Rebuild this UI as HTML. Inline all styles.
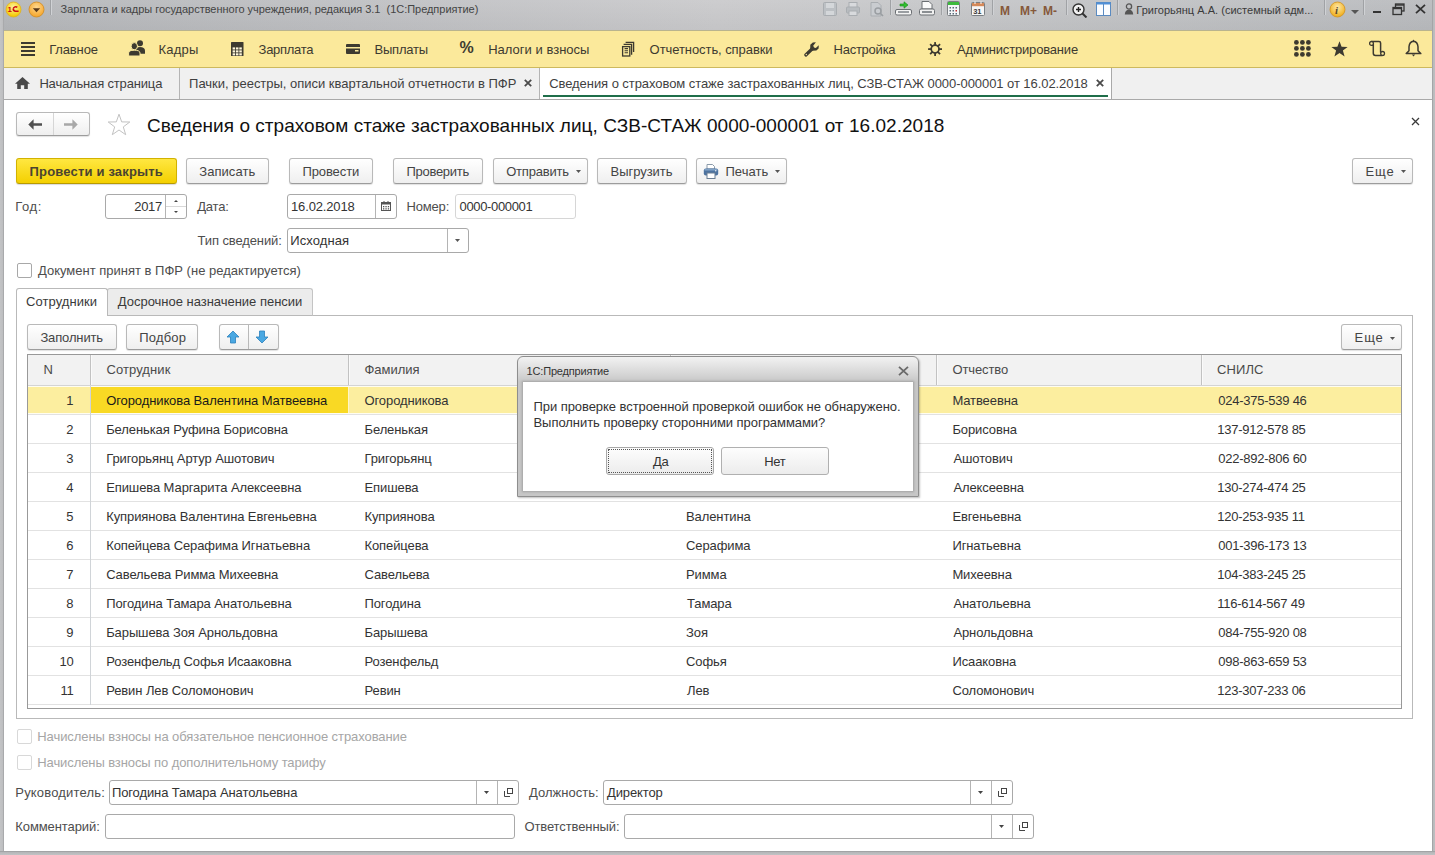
<!DOCTYPE html><html><head><meta charset="utf-8"><style>
html,body{margin:0;padding:0}
body{width:1435px;height:855px;overflow:hidden;position:relative;background:#abadb0;font-family:"Liberation Sans",sans-serif}
.a{position:absolute;display:block}
.t{position:absolute;white-space:pre;line-height:1}
</style></head><body>
<div class="a" style="left:0px;top:0px;width:1435px;height:855px;background:#aeb0b3"></div>
<div class="a" style="left:0px;top:0px;width:1435px;height:31px;background:linear-gradient(90deg,#b5b7ba 0%,#bfc0c3 25%,#cacacc 50%,#c6c7c9 65%,#b9bbbe 100%)"></div>
<div class="a" style="left:0px;top:0px;width:1435px;height:31px;background:linear-gradient(rgba(255,255,255,0.06),rgba(0,0,0,0.03))"></div>
<div class="a" style="left:0px;top:0px;width:4px;height:855px;background:linear-gradient(90deg,#c3c4c6,#bdbec0 70%,#a9aaac 75%,#a9aaac)"></div>
<div class="a" style="left:1432px;top:0px;width:3px;height:855px;background:linear-gradient(90deg,#a4a5a7 33%,#b9babc 34%,#bdbec0)"></div>
<svg class="a" style="left:5px;top:1px;" width="17" height="17" viewBox="0 0 17 17"><defs><radialGradient id="lg" cx="50%" cy="35%" r="60%"><stop offset="0" stop-color="#fff7a0"/><stop offset="1" stop-color="#f5c800"/></radialGradient></defs><circle cx="8.5" cy="8.5" r="7.5" fill="url(#lg)" stroke="#e0b020" stroke-width="0.8"/><text x="2.6" y="11.4" font-family="Liberation Sans" font-weight="bold" font-size="8" fill="#cc1010">1</text><path d="M8.3 7.2 Q10 5 12.3 6.2 M8.2 7.6 Q8.2 10.2 10.5 10.2 L13.6 10.2" stroke="#cc1010" stroke-width="1.6" fill="none"/></svg>
<svg class="a" style="left:28px;top:1px;" width="17" height="17" viewBox="0 0 17 17"><defs><radialGradient id="og" cx="50%" cy="35%" r="60%"><stop offset="0" stop-color="#ffd890"/><stop offset="1" stop-color="#f5a830"/></radialGradient></defs><circle cx="8.5" cy="8.5" r="7.5" fill="url(#og)" stroke="#d08a20" stroke-width="0.8"/><path d="M4.8 7.2 L12.2 7.2 L8.5 11.2 Z" fill="#5a3a1a"/></svg>
<div class="a" style="left:50px;top:0px;width:1px;height:15px;background:#a0a2a5;box-shadow:1px 0 0 #d0d2d5"></div>
<div class="t" style="left:60.60px;top:4px;font-size:11px;color:#444;letter-spacing:-0.028px;">Зарплата и кадры государственного учреждения, редакция 3.1  (1С:Предприятие)</div>
<svg class="a" style="left:823px;top:2px;" width="14" height="14" viewBox="0 0 14 14"><rect x="0.5" y="0.5" width="13" height="13" rx="1" fill="#bcc0c4" stroke="#a9adb1"/><rect x="3" y="1" width="8" height="5" fill="#d4d7da"/><rect x="3" y="9" width="8" height="4" fill="#d4d7da"/></svg>
<svg class="a" style="left:846px;top:2px;" width="14" height="14" viewBox="0 0 14 14"><rect x="3" y="0.5" width="8" height="5" fill="#d8dadd" stroke="#a9adb1"/><rect x="0.5" y="5" width="13" height="6" rx="1" fill="#b8bcc0" stroke="#a9adb1"/><rect x="3" y="9" width="8" height="4.5" fill="#d8dadd" stroke="#a9adb1"/></svg>
<svg class="a" style="left:870px;top:2px;" width="14" height="15" viewBox="0 0 14 15"><path d="M1 0.5 H8 L11 3.5 V14 H1 Z" fill="#c9ccd0" stroke="#a9adb1"/><circle cx="8" cy="9" r="3" fill="none" stroke="#9a9ea2" stroke-width="1.5"/><path d="M10 11 L13 14" stroke="#9a9ea2" stroke-width="1.6"/></svg>
<div class="a" style="left:890px;top:0px;width:1px;height:15px;background:#a0a2a5;box-shadow:1px 0 0 #d0d2d5"></div>
<svg class="a" style="left:895px;top:1px;" width="17" height="15" viewBox="0 0 17 15"><path d="M5 3 H9 V0.8 L13 4 L9 7.2 V5 H5 Z" fill="#2fbf2f" stroke="#1a8a1a" stroke-width="0.6"/><rect x="0.5" y="8.5" width="16" height="5.5" rx="1.5" fill="#f4f4f4" stroke="#6a6e72"/><rect x="3" y="10" width="11" height="2" fill="#9a9ea2"/></svg>
<svg class="a" style="left:919px;top:1px;" width="16" height="15" viewBox="0 0 16 15"><path d="M3 0.5 H10 L13 3.5 V8 H3 Z" fill="#fafafa" stroke="#6a6e72"/><rect x="0.5" y="8" width="15" height="6" rx="1.5" fill="#f0f0f0" stroke="#6a6e72"/><rect x="3" y="10" width="10" height="2" fill="#8a8e92"/></svg>
<div class="a" style="left:941px;top:0px;width:1px;height:15px;background:#a0a2a5;box-shadow:1px 0 0 #d0d2d5"></div>
<svg class="a" style="left:947px;top:1px;" width="13" height="15" viewBox="0 0 13 15"><rect x="0.5" y="0.5" width="12" height="14" rx="1" fill="#f4f6f8" stroke="#7a7e82"/><rect x="1" y="1" width="11" height="3" fill="#3cba3c"/><g fill="#5a6a7a"><rect x="2.5" y="6" width="1.5" height="1.5"/><rect x="5.5" y="6" width="1.5" height="1.5"/><rect x="8.5" y="6" width="1.5" height="1.5"/><rect x="2.5" y="9" width="1.5" height="1.5"/><rect x="5.5" y="9" width="1.5" height="1.5"/><rect x="8.5" y="9" width="1.5" height="1.5" fill="#c03030"/><rect x="2.5" y="12" width="1.5" height="1.5"/><rect x="5.5" y="12" width="1.5" height="1.5"/><rect x="8.5" y="12" width="1.5" height="1.5"/></g></svg>
<svg class="a" style="left:971px;top:1px;" width="14" height="15" viewBox="0 0 14 15"><rect x="0.5" y="1.5" width="13" height="13" rx="1" fill="#f6f6f6" stroke="#7a7e82"/><rect x="1" y="2" width="12" height="3.2" fill="#d4895a"/><path d="M4 0.5 V3 M10 0.5 V3" stroke="#fff" stroke-width="1"/><text x="2.2" y="12.8" font-family="Liberation Sans" font-weight="bold" font-size="7.5" fill="#3a3a3a">31</text></svg>
<div class="a" style="left:992px;top:0px;width:1px;height:15px;background:#a0a2a5;box-shadow:1px 0 0 #d0d2d5"></div>
<div class="t" style="left:1000.00px;top:5px;font-size:12px;color:#85583a;letter-spacing:0.000px;font-weight:bold;">M</div>
<div class="t" style="left:1020.00px;top:5px;font-size:12px;color:#85583a;letter-spacing:0.000px;font-weight:bold;">M+</div>
<div class="t" style="left:1043.00px;top:5px;font-size:12px;color:#85583a;letter-spacing:0.000px;font-weight:bold;">M-</div>
<div class="a" style="left:1066px;top:0px;width:1px;height:15px;background:#a0a2a5;box-shadow:1px 0 0 #d0d2d5"></div>
<svg class="a" style="left:1072px;top:3px;" width="16" height="15" viewBox="0 0 16 15"><circle cx="6.5" cy="6.5" r="5.5" fill="#f2f2f2" stroke="#333" stroke-width="1.4"/><path d="M4 6.5 H9 M6.5 4 V9" stroke="#222" stroke-width="1.4"/><path d="M10.5 10.5 L14.5 14.5" stroke="#333" stroke-width="2"/></svg>
<svg class="a" style="left:1096px;top:2px;" width="15" height="14" viewBox="0 0 15 14"><rect x="0.5" y="0.5" width="14" height="13" fill="#fafcff" stroke="#5a8ac0"/><rect x="0.5" y="0.5" width="14" height="2" fill="#4f8fd8"/><path d="M7.5 2 V13.5" stroke="#5a8ac0"/></svg>
<div class="a" style="left:1117px;top:0px;width:1px;height:15px;background:#a0a2a5;box-shadow:1px 0 0 #d0d2d5"></div>
<svg class="a" style="left:1124px;top:3px;" width="10" height="12" viewBox="0 0 10 12"><circle cx="5" cy="3.5" r="2.6" fill="none" stroke="#555" stroke-width="1.3"/><path d="M0.8 11.5 Q1 6.8 5 6.8 Q9 6.8 9.2 11.5 Z" fill="#555"/></svg>
<div class="t" style="left:1136.30px;top:5px;font-size:11px;color:#3a3a3a;letter-spacing:0.022px;">Григорьянц А.А. (системный адм...</div>
<div class="a" style="left:1324px;top:0px;width:1px;height:15px;background:#a0a2a5;box-shadow:1px 0 0 #d0d2d5"></div>
<svg class="a" style="left:1329px;top:1px;" width="17" height="17" viewBox="0 0 17 17"><defs><radialGradient id="ig" cx="50%" cy="35%" r="60%"><stop offset="0" stop-color="#ffe9a8"/><stop offset="1" stop-color="#f0b020"/></radialGradient></defs><circle cx="8.5" cy="8.5" r="7.5" fill="url(#ig)" stroke="#d09020" stroke-width="0.8"/><text x="6" y="13" font-family="Liberation Serif" font-style="italic" font-weight="bold" font-size="11" fill="#5a4a2a">i</text></svg>
<svg class="a" style="left:1351px;top:10px;" width="8" height="4" viewBox="0 0 8 4"><path d="M0 0 H8 L4 4 Z" fill="#555"/></svg>
<div class="a" style="left:1363px;top:0px;width:1px;height:15px;background:#a0a2a5;box-shadow:1px 0 0 #d0d2d5"></div>
<div class="a" style="left:1373px;top:11px;width:8px;height:2px;background:#333"></div>
<svg class="a" style="left:1392px;top:3px;" width="13" height="13" viewBox="0 0 13 13"><rect x="3.5" y="1" width="8.5" height="7" fill="none" stroke="#333" stroke-width="1.3"/><rect x="1" y="4.5" width="8.5" height="7" fill="#b8babd" stroke="#333" stroke-width="1.3"/><path d="M1 5.5 H9.5" stroke="#333" stroke-width="1.4"/><path d="M3.5 2 H12" stroke="#333" stroke-width="1.4"/></svg>
<svg class="a" style="left:1415px;top:4px;" width="11" height="10" viewBox="0 0 11 10"><path d="M1 0.8 L10 9.2 M10 0.8 L1 9.2" stroke="#333" stroke-width="1.8"/></svg>
<div class="a" style="left:4px;top:31px;width:1428px;height:37px;background:#fbe99b"></div>
<div class="a" style="left:4px;top:67px;width:1428px;height:1px;background:#cdb95e"></div>
<div class="a" style="left:4px;top:30px;width:1428px;height:1px;background:#b9b48e"></div>
<div class="a" style="left:21px;top:42px;width:14px;height:2px;background:#3d3a30"></div>
<div class="a" style="left:21px;top:46px;width:14px;height:2px;background:#3d3a30"></div>
<div class="a" style="left:21px;top:50px;width:14px;height:2px;background:#3d3a30"></div>
<div class="a" style="left:21px;top:54px;width:14px;height:2px;background:#3d3a30"></div>
<div class="t" style="left:49.20px;top:43px;font-size:13px;color:#3d3a30;letter-spacing:-0.150px;">Главное</div>
<svg class="a" style="left:128px;top:40px;" width="18" height="17" viewBox="0 0 18 17"><circle cx="12" cy="3.3" r="3" fill="#3d3a30"/><path d="M7.5 13.8 V10.5 Q7.5 7 12 7 Q16.8 7 17 10.5 V13.8 Z" fill="#3d3a30"/><ellipse cx="6.3" cy="6.2" rx="3.2" ry="3.6" fill="#3d3a30" stroke="#fae99c" stroke-width="1"/><path d="M0.6 16 V13 Q0.6 10.2 6.3 10.2 Q12 10.2 12 13 V16 Z" fill="#3d3a30" stroke="#fae99c" stroke-width="1"/></svg>
<div class="t" style="left:158.40px;top:43px;font-size:13px;color:#3d3a30;letter-spacing:0.225px;">Кадры</div>
<svg class="a" style="left:231px;top:42px;" width="13" height="14" viewBox="0 0 13 14"><rect x="0" y="0" width="12.5" height="14" rx="0.6" fill="#3d3a30"/><rect x="1.60" y="5.40" width="2.5" height="2.1" fill="#fff8dc"/><rect x="1.60" y="8.35" width="2.5" height="2.1" fill="#fff8dc"/><rect x="1.60" y="11.30" width="2.5" height="2.1" fill="#fff8dc"/><rect x="4.95" y="5.40" width="2.5" height="2.1" fill="#fff8dc"/><rect x="4.95" y="8.35" width="2.5" height="2.1" fill="#fff8dc"/><rect x="4.95" y="11.30" width="2.5" height="2.1" fill="#fff8dc"/><rect x="8.30" y="5.40" width="2.5" height="2.1" fill="#fff8dc"/><rect x="8.30" y="8.35" width="2.5" height="2.1" fill="#fff8dc"/><rect x="8.30" y="11.30" width="2.5" height="2.1" fill="#fff8dc"/></svg>
<div class="t" style="left:258.60px;top:43px;font-size:13px;color:#3d3a30;letter-spacing:-0.286px;">Зарплата</div>
<svg class="a" style="left:346px;top:44px;" width="14" height="10" viewBox="0 0 14 10"><rect x="0" y="0" width="14" height="10" rx="1" fill="#3d3a30"/><rect x="0" y="3" width="14" height="1.5" fill="#fae99c"/><rect x="9" y="6" width="3.5" height="1.5" fill="#fae99c"/></svg>
<div class="t" style="left:374.50px;top:43px;font-size:13px;color:#3d3a30;letter-spacing:-0.200px;">Выплаты</div>
<div class="t" style="left:459.50px;top:40px;font-size:16px;color:#3d3a30;letter-spacing:0.000px;font-weight:bold;">%</div>
<div class="t" style="left:488.20px;top:43px;font-size:13px;color:#3d3a30;letter-spacing:0.014px;">Налоги и взносы</div>
<svg class="a" style="left:621px;top:41px;" width="14" height="16" viewBox="0 0 14 16"><rect x="1.6" y="5.6" width="7.2" height="9.4" fill="#fae99c" stroke="#3d3a30" stroke-width="1.3"/><path d="M2.6 3.4 H10.6 V13.8" fill="none" stroke="#3d3a30" stroke-width="1.3"/><path d="M4.6 1.3 H12.6 V11" fill="none" stroke="#3d3a30" stroke-width="1.3"/><path d="M3.6 7.6 H7 M3.6 9.7 H7 M3.6 11.8 H7" stroke="#3d3a30" stroke-width="1.1"/></svg>
<div class="t" style="left:649.60px;top:43px;font-size:13px;color:#3d3a30;letter-spacing:-0.072px;">Отчетность, справки</div>
<svg class="a" style="left:798px;top:36px;" width="26" height="26" viewBox="0 0 26 26"><path d="M7.8 19 L14 13" stroke="#3d3a30" stroke-width="3.2" stroke-linecap="round"/><path d="M12.2 13.5 L12.3 8.8 L14.8 6.6 L17.9 6.2 L15.2 9.7 Q15.6 11.9 17.8 11.9 L20.8 9.2 L20.6 12.4 L18.4 14.6 L14 14.8 Z" fill="#3d3a30"/><circle cx="8.3" cy="18.5" r="0.7" fill="#fae99c"/></svg>
<div class="t" style="left:833.50px;top:43px;font-size:13px;color:#3d3a30;letter-spacing:-0.237px;">Настройка</div>
<svg class="a" style="left:928px;top:42px;" width="14" height="14" viewBox="0 0 14 14"><g transform="translate(7.1 7.1)"><g fill="#3d3a30"><rect x="-0.9" y="-7" width="1.8" height="3.5" transform="rotate(0)"/><rect x="-0.9" y="-7" width="1.8" height="3.5" transform="rotate(45)"/><rect x="-0.9" y="-7" width="1.8" height="3.5" transform="rotate(90)"/><rect x="-0.9" y="-7" width="1.8" height="3.5" transform="rotate(135)"/><rect x="-0.9" y="-7" width="1.8" height="3.5" transform="rotate(180)"/><rect x="-0.9" y="-7" width="1.8" height="3.5" transform="rotate(225)"/><rect x="-0.9" y="-7" width="1.8" height="3.5" transform="rotate(270)"/><rect x="-0.9" y="-7" width="1.8" height="3.5" transform="rotate(315)"/></g><circle r="3.9" fill="none" stroke="#3d3a30" stroke-width="1.7"/></g></svg>
<div class="t" style="left:957.00px;top:43px;font-size:13px;color:#3d3a30;letter-spacing:-0.175px;">Администрирование</div>
<svg class="a" style="left:1294px;top:40px;" width="17" height="17" viewBox="0 0 17 17"><circle cx="2.4" cy="2.4" r="2.4" fill="#3d3a30"/><circle cx="2.4" cy="8.4" r="2.4" fill="#3d3a30"/><circle cx="2.4" cy="14.4" r="2.4" fill="#3d3a30"/><circle cx="8.4" cy="2.4" r="2.4" fill="#3d3a30"/><circle cx="8.4" cy="8.4" r="2.4" fill="#3d3a30"/><circle cx="8.4" cy="14.4" r="2.4" fill="#3d3a30"/><circle cx="14.4" cy="2.4" r="2.4" fill="#3d3a30"/><circle cx="14.4" cy="8.4" r="2.4" fill="#3d3a30"/><circle cx="14.4" cy="14.4" r="2.4" fill="#3d3a30"/></svg>
<svg class="a" style="left:1331px;top:41px;" width="17" height="16" viewBox="0 0 17 16"><path d="M8.5 0.3 L10.6 5.8 L16.6 6 L11.9 9.6 L13.6 15.5 L8.5 12 L3.4 15.5 L5.1 9.6 L0.4 6 L6.4 5.8 Z" fill="#3d3a30"/></svg>
<svg class="a" style="left:1368px;top:40px;" width="18" height="17" viewBox="0 0 18 17"><path d="M3.5 1.4 H11 Q12.6 1.4 12.6 3 V12.6" fill="none" stroke="#3d3a30" stroke-width="1.5"/><path d="M5.3 3.5 V13.2 Q5.3 15.4 7.5 15.4 H14.6" fill="none" stroke="#3d3a30" stroke-width="1.5"/><circle cx="3.5" cy="3.4" r="1.9" fill="#fae99c" stroke="#3d3a30" stroke-width="1.3"/><circle cx="14.6" cy="13.4" r="1.9" fill="#fae99c" stroke="#3d3a30" stroke-width="1.3"/></svg>
<svg class="a" style="left:1405px;top:39px;" width="17" height="18" viewBox="0 0 17 18"><path d="M8.5 2.2 Q12.6 2.6 13 7.8 V11.8 L15.8 14.6 H1.2 L4 11.8 V7.8 Q4.4 2.6 8.5 2.2 Z" fill="none" stroke="#3d3a30" stroke-width="1.5" stroke-linejoin="round"/><path d="M7.3 2.4 L8.5 0.6 L9.7 2.4 Z" fill="#3d3a30"/><path d="M6.8 15.6 H10.2 L8.5 17.4 Z" fill="#3d3a30"/></svg>
<div class="a" style="left:4px;top:68px;width:1428px;height:31px;background:#f0f0f0"></div>
<div class="a" style="left:4px;top:99px;width:1428px;height:1px;background:#a9a9a9"></div>
<svg class="a" style="left:15px;top:77px;" width="15" height="12" viewBox="0 0 15 12"><path d="M7.5 0 L15 6.8 H12.8 V12 H9.2 V8.2 H5.8 V12 H2.2 V6.8 H0 Z" fill="#4a4a4a"/></svg>
<div class="t" style="left:39.40px;top:77px;font-size:13px;color:#3f3f3f;letter-spacing:-0.165px;">Начальная страница</div>
<div class="a" style="left:179px;top:68px;width:1px;height:31px;background:#b4b4b4"></div>
<div class="t" style="left:189.10px;top:77px;font-size:13px;color:#3f3f3f;letter-spacing:-0.014px;">Пачки, реестры, описи квартальной отчетности в ПФР</div>
<svg class="a" style="left:524px;top:79px;" width="8" height="8" viewBox="0 0 8 8"><path d="M0.8 0.8 L7.2 7.2 M7.2 0.8 L0.8 7.2" stroke="#4a4a4a" stroke-width="1.8"/></svg>
<div class="a" style="left:539px;top:68px;width:1px;height:31px;background:#b4b4b4"></div>
<div class="a" style="left:540px;top:68px;width:571px;height:31px;background:#fff"></div>
<div class="a" style="left:543px;top:95px;width:565px;height:2px;background:#1f6e4a"></div>
<div class="t" style="left:549.20px;top:77px;font-size:13px;color:#3f3f3f;letter-spacing:-0.062px;">Сведения о страховом стаже застрахованных лиц, СЗВ-СТАЖ 0000-000001 от 16.02.2018</div>
<svg class="a" style="left:1096px;top:79px;" width="8" height="8" viewBox="0 0 8 8"><path d="M0.8 0.8 L7.2 7.2 M7.2 0.8 L0.8 7.2" stroke="#4a4a4a" stroke-width="1.8"/></svg>
<div class="a" style="left:1111px;top:68px;width:1px;height:31px;background:#a9a9a9"></div>
<div class="a" style="left:4px;top:100px;width:1428px;height:751px;background:#fff"></div>
<div class="a" style="left:16px;top:112px;width:74px;height:24px;box-sizing:border-box;border:1px solid #b9b9b9;border-bottom-color:#9c9c9c;border-radius:3px;background:linear-gradient(#ffffff,#efefef);box-shadow:0 1px 1px rgba(0,0,0,0.12);"></div>
<div class="a" style="left:53px;top:113px;width:1px;height:22px;background:#d6d6d6"></div>
<svg class="a" style="left:28px;top:119px;" width="14" height="11" viewBox="0 0 14 11"><path d="M0.3 5.5 L5.6 0.2 V4.2 H14 V6.8 H5.6 V10.8 Z" fill="#505050"/></svg>
<svg class="a" style="left:64px;top:119px;" width="14" height="11" viewBox="0 0 14 11"><path d="M13.7 5.5 L8.4 0.2 V4.2 H0 V6.8 H8.4 V10.8 Z" fill="#a8a8a8"/></svg>
<svg class="a" style="left:107px;top:113px;" width="24" height="23" viewBox="0 0 24 23"><path d="M12 1.2 L14.7 8.9 L22.8 9 L16.3 13.9 L18.7 21.7 L12 17 L5.3 21.7 L7.7 13.9 L1.2 9 L9.3 8.9 Z" fill="#fff" stroke="#c2c2c2" stroke-width="1"/></svg>
<div class="t" style="left:147.00px;top:116px;font-size:19px;color:#111;letter-spacing:0.035px;">Сведения о страховом стаже застрахованных лиц, СЗВ-СТАЖ 0000-000001 от 16.02.2018</div>
<svg class="a" style="left:1411px;top:117px;" width="9" height="9" viewBox="0 0 9 9"><path d="M1 1 L8 8 M8 1 L1 8" stroke="#3a3a3a" stroke-width="1.3"/></svg>
<div class="a" style="left:16px;top:158px;width:161px;height:26px;box-sizing:border-box;border:1px solid #d2b200;border-bottom-color:#b89a00;border-radius:3px;background:linear-gradient(#ffe741,#f4d000);box-shadow:0 1px 1px rgba(0,0,0,0.15)"></div>
<div class="t" style="left:29.60px;top:165px;font-size:13px;color:#4a4430;letter-spacing:0.171px;font-weight:bold;">Провести и закрыть</div>
<div class="a" style="left:186px;top:158px;width:83px;height:26px;box-sizing:border-box;border:1px solid #b9b9b9;border-bottom-color:#9c9c9c;border-radius:3px;background:linear-gradient(#ffffff,#efefef);box-shadow:0 1px 1px rgba(0,0,0,0.12);"></div>
<div class="t" style="left:199.30px;top:165px;font-size:13px;color:#444;letter-spacing:0.043px;">Записать</div>
<div class="a" style="left:289px;top:158px;width:84px;height:26px;box-sizing:border-box;border:1px solid #b9b9b9;border-bottom-color:#9c9c9c;border-radius:3px;background:linear-gradient(#ffffff,#efefef);box-shadow:0 1px 1px rgba(0,0,0,0.12);"></div>
<div class="t" style="left:302.40px;top:165px;font-size:13px;color:#444;letter-spacing:-0.086px;">Провести</div>
<div class="a" style="left:393px;top:158px;width:90px;height:26px;box-sizing:border-box;border:1px solid #b9b9b9;border-bottom-color:#9c9c9c;border-radius:3px;background:linear-gradient(#ffffff,#efefef);box-shadow:0 1px 1px rgba(0,0,0,0.12);"></div>
<div class="t" style="left:406.50px;top:165px;font-size:13px;color:#444;letter-spacing:-0.288px;">Проверить</div>
<div class="a" style="left:493px;top:158px;width:95px;height:26px;box-sizing:border-box;border:1px solid #b9b9b9;border-bottom-color:#9c9c9c;border-radius:3px;background:linear-gradient(#ffffff,#efefef);box-shadow:0 1px 1px rgba(0,0,0,0.12);"></div>
<div class="t" style="left:506.20px;top:165px;font-size:13px;color:#444;letter-spacing:-0.212px;">Отправить</div>
<svg class="a" style="left:576px;top:170px;" width="5" height="3" viewBox="0 0 5 3"><path d="M0 0 H5 L2.5 3 Z" fill="#555"/></svg>
<div class="a" style="left:597px;top:158px;width:90px;height:26px;box-sizing:border-box;border:1px solid #b9b9b9;border-bottom-color:#9c9c9c;border-radius:3px;background:linear-gradient(#ffffff,#efefef);box-shadow:0 1px 1px rgba(0,0,0,0.12);"></div>
<div class="t" style="left:610.60px;top:165px;font-size:13px;color:#444;letter-spacing:-0.050px;">Выгрузить</div>
<div class="a" style="left:696px;top:158px;width:91px;height:26px;box-sizing:border-box;border:1px solid #b9b9b9;border-bottom-color:#9c9c9c;border-radius:3px;background:linear-gradient(#ffffff,#efefef);box-shadow:0 1px 1px rgba(0,0,0,0.12);"></div>
<svg class="a" style="left:703px;top:164px;" width="16" height="15" viewBox="0 0 16 15"><path d="M4 0.5 H9.5 L11.5 2.5 V5 H4 Z" fill="#fff" stroke="#8a9aaa"/><rect x="0.8" y="4.6" width="14.4" height="6.8" rx="2" fill="#4d73a0"/><rect x="1.5" y="5" width="13" height="1.6" fill="#7fa0c4"/><rect x="12" y="6.3" width="1.3" height="1" fill="#fff"/><rect x="4" y="9" width="8" height="5.5" fill="#fff" stroke="#6a7e94"/></svg>
<div class="t" style="left:725.40px;top:165px;font-size:13px;color:#444;letter-spacing:0.060px;">Печать</div>
<svg class="a" style="left:775px;top:170px;" width="5" height="3" viewBox="0 0 5 3"><path d="M0 0 H5 L2.5 3 Z" fill="#555"/></svg>
<div class="a" style="left:1352px;top:158px;width:61px;height:26px;box-sizing:border-box;border:1px solid #b9b9b9;border-bottom-color:#9c9c9c;border-radius:3px;background:linear-gradient(#ffffff,#efefef);box-shadow:0 1px 1px rgba(0,0,0,0.12);"></div>
<div class="t" style="left:1365.60px;top:165px;font-size:13px;color:#444;letter-spacing:0.850px;">Еще</div>
<svg class="a" style="left:1401px;top:170px;" width="5" height="3" viewBox="0 0 5 3"><path d="M0 0 H5 L2.5 3 Z" fill="#555"/></svg>
<div class="t" style="left:15.30px;top:200px;font-size:13px;color:#4d4d4d;letter-spacing:0.600px;">Год:</div>
<div class="a" style="left:105px;top:194px;width:82px;height:25px;box-sizing:border-box;border:1px solid #a9a9a9;border-radius:3px;background:#fff;"></div>
<div class="a" style="left:165px;top:195px;width:1px;height:23px;background:#b4b4b4"></div>
<div class="a" style="left:166px;top:206px;width:20px;height:1px;background:#d8d8d8"></div>
<svg class="a" style="left:174px;top:200px;" width="4" height="2" viewBox="0 0 4 2"><path d="M0 2 H4 L2 0 Z" fill="#444"/></svg>
<svg class="a" style="left:174px;top:211px;" width="4" height="2" viewBox="0 0 4 2"><path d="M0 0 H4 L2 2 Z" fill="#444"/></svg>
<div class="t" style="left:134.30px;top:200px;font-size:13px;color:#333;letter-spacing:-0.367px;">2017</div>
<div class="t" style="left:197.20px;top:200px;font-size:13px;color:#4d4d4d;letter-spacing:-0.175px;">Дата:</div>
<div class="a" style="left:287px;top:194px;width:110px;height:25px;box-sizing:border-box;border:1px solid #a9a9a9;border-radius:3px;background:#fff;"></div>
<div class="a" style="left:375px;top:195px;width:1px;height:23px;background:#b4b4b4"></div>
<svg class="a" style="left:381px;top:201px;" width="10" height="10" viewBox="0 0 10 10"><rect x="0.5" y="1.5" width="9" height="8" fill="none" stroke="#555"/><rect x="0.5" y="1.5" width="9" height="2" fill="#555"/><path d="M3 0 V2 M7 0 V2" stroke="#555"/><g fill="#555"><rect x="2" y="5" width="1.3" height="1.3"/><rect x="4.4" y="5" width="1.3" height="1.3"/><rect x="6.8" y="5" width="1.3" height="1.3"/><rect x="2" y="7.2" width="1.3" height="1.3"/><rect x="4.4" y="7.2" width="1.3" height="1.3"/><rect x="6.8" y="7.2" width="1.3" height="1.3"/></g></svg>
<div class="t" style="left:291.00px;top:200px;font-size:13px;color:#333;letter-spacing:-0.144px;">16.02.2018</div>
<div class="t" style="left:406.40px;top:200px;font-size:13px;color:#4d4d4d;letter-spacing:-0.140px;">Номер:</div>
<div class="a" style="left:455px;top:194px;width:121px;height:25px;box-sizing:border-box;border:1px solid #d6d6d6;border-radius:3px;background:#fff;"></div>
<div class="t" style="left:459.50px;top:200px;font-size:13px;color:#333;letter-spacing:-0.350px;">0000-000001</div>
<div class="t" style="left:197.60px;top:234px;font-size:13px;color:#4d4d4d;letter-spacing:-0.117px;">Тип сведений:</div>
<div class="a" style="left:287px;top:228px;width:182px;height:25px;box-sizing:border-box;border:1px solid #a9a9a9;border-radius:3px;background:#fff;"></div>
<div class="a" style="left:447px;top:229px;width:1px;height:23px;background:#b4b4b4"></div>
<svg class="a" style="left:455px;top:239px;" width="5" height="3" viewBox="0 0 5 3"><path d="M0 0 H5 L2.5 3 Z" fill="#555"/></svg>
<div class="t" style="left:290.20px;top:234px;font-size:13px;color:#333;letter-spacing:0.114px;">Исходная</div>
<div class="a" style="left:17px;top:263px;width:15px;height:15px;box-sizing:border-box;border:1px solid #a8a8a8;border-radius:2px;background:#fff"></div>
<div class="t" style="left:38.00px;top:264px;font-size:13px;color:#4d4d4d;letter-spacing:0.000px;">Документ принят в ПФР (не редактируется)</div>
<div class="a" style="left:16px;top:315px;width:1397px;height:404px;box-sizing:border-box;border:1px solid #b9b9b9;border-top:none;background:#fff"></div>
<div class="a" style="left:312px;top:315px;width:1101px;height:1px;background:#b9b9b9"></div>
<div class="a" style="left:107px;top:288px;width:206px;height:28px;box-sizing:border-box;border:1px solid #c4c4c4;border-bottom:1px solid #b9b9b9;border-radius:3px 3px 0 0;background:#ececec"></div>
<div class="a" style="left:16px;top:288px;width:92px;height:28px;box-sizing:border-box;border:1px solid #b9b9b9;border-bottom:none;border-radius:3px 3px 0 0;background:#fff"></div>
<div class="t" style="left:26.10px;top:295px;font-size:13px;color:#3a3a3a;letter-spacing:0.056px;">Сотрудники</div>
<div class="t" style="left:117.80px;top:295px;font-size:13px;color:#3a3a3a;letter-spacing:-0.019px;">Досрочное назначение пенсии</div>
<div class="a" style="left:27px;top:324px;width:90px;height:26px;box-sizing:border-box;border:1px solid #b9b9b9;border-bottom-color:#9c9c9c;border-radius:3px;background:linear-gradient(#ffffff,#efefef);box-shadow:0 1px 1px rgba(0,0,0,0.12);"></div>
<div class="t" style="left:40.40px;top:331px;font-size:13px;color:#444;letter-spacing:-0.138px;">Заполнить</div>
<div class="a" style="left:126px;top:324px;width:72px;height:26px;box-sizing:border-box;border:1px solid #b9b9b9;border-bottom-color:#9c9c9c;border-radius:3px;background:linear-gradient(#ffffff,#efefef);box-shadow:0 1px 1px rgba(0,0,0,0.12);"></div>
<div class="t" style="left:139.30px;top:331px;font-size:13px;color:#444;letter-spacing:0.160px;">Подбор</div>
<div class="a" style="left:219px;top:324px;width:60px;height:26px;box-sizing:border-box;border:1px solid #b9b9b9;border-bottom-color:#9c9c9c;border-radius:3px;background:linear-gradient(#ffffff,#efefef);box-shadow:0 1px 1px rgba(0,0,0,0.12);"></div>
<div class="a" style="left:248px;top:325px;width:1px;height:24px;background:#b9b9b9"></div>
<svg class="a" style="left:226px;top:330px;" width="14" height="14" viewBox="0 0 14 14"><path d="M7 1 L13 7 H9.5 V13 H4.5 V7 H1 Z" fill="#4aa8e2" stroke="#2b80bd" stroke-width="0.8"/></svg>
<svg class="a" style="left:255px;top:330px;" width="14" height="14" viewBox="0 0 14 14"><path d="M7 13 L13 7 H9.5 V1 H4.5 V7 H1 Z" fill="#4aa8e2" stroke="#2b80bd" stroke-width="0.8"/></svg>
<div class="a" style="left:1341px;top:324px;width:61px;height:26px;box-sizing:border-box;border:1px solid #b9b9b9;border-bottom-color:#9c9c9c;border-radius:3px;background:linear-gradient(#ffffff,#efefef);box-shadow:0 1px 1px rgba(0,0,0,0.12);"></div>
<div class="t" style="left:1354.60px;top:331px;font-size:13px;color:#444;letter-spacing:0.900px;">Еще</div>
<svg class="a" style="left:1390px;top:337px;" width="5" height="3" viewBox="0 0 5 3"><path d="M0 0 H5 L2.5 3 Z" fill="#555"/></svg>
<div class="a" style="left:27px;top:354px;width:1375px;height:355px;box-sizing:border-box;border:1px solid #999;background:#fff"></div>
<div class="a" style="left:28px;top:355px;width:1373px;height:30px;background:#f2f2f2"></div>
<div class="a" style="left:28px;top:385px;width:1373px;height:1px;background:#d4d4d4"></div>
<div class="a" style="left:90px;top:355px;width:1px;height:30px;background:#c2c2c2"></div>
<div class="a" style="left:91px;top:355px;width:1px;height:30px;background:#fafafa"></div>
<div class="a" style="left:348px;top:355px;width:1px;height:30px;background:#c2c2c2"></div>
<div class="a" style="left:349px;top:355px;width:1px;height:30px;background:#fafafa"></div>
<div class="a" style="left:670px;top:355px;width:1px;height:30px;background:#c2c2c2"></div>
<div class="a" style="left:671px;top:355px;width:1px;height:30px;background:#fafafa"></div>
<div class="a" style="left:936px;top:355px;width:1px;height:30px;background:#c2c2c2"></div>
<div class="a" style="left:937px;top:355px;width:1px;height:30px;background:#fafafa"></div>
<div class="a" style="left:1201px;top:355px;width:1px;height:30px;background:#c2c2c2"></div>
<div class="a" style="left:1202px;top:355px;width:1px;height:30px;background:#fafafa"></div>
<div class="t" style="left:43.40px;top:363px;font-size:13px;color:#4a4a4a;letter-spacing:-0.120px;">N</div>
<div class="t" style="left:106.40px;top:363px;font-size:13px;color:#4a4a4a;letter-spacing:0.100px;">Сотрудник</div>
<div class="t" style="left:364.50px;top:363px;font-size:13px;color:#4a4a4a;letter-spacing:-0.017px;">Фамилия</div>
<div class="t" style="left:686.00px;top:363px;font-size:13px;color:#4a4a4a;letter-spacing:-0.120px;">Имя</div>
<div class="t" style="left:952.40px;top:363px;font-size:13px;color:#4a4a4a;letter-spacing:-0.114px;">Отчество</div>
<div class="t" style="left:1217.00px;top:363px;font-size:13px;color:#4a4a4a;letter-spacing:0.100px;">СНИЛС</div>
<div class="a" style="left:28px;top:387px;width:1373px;height:26px;background:#fcee9f"></div>
<div class="a" style="left:91px;top:387px;width:257px;height:26px;background:#f9d924"></div>
<div class="a" style="left:348px;top:387px;width:1px;height:26px;background:#fff6c8"></div>
<div class="a" style="left:28px;top:386px;width:1373px;height:1px;background:#fffdf0"></div>
<div class="a" style="left:28px;top:413px;width:1373px;height:1px;background:#fffdf0"></div>
<div class="a" style="left:28px;top:414px;width:1373px;height:1px;background:#e2e2e2"></div>
<div class="t" style="left:66.30px;top:394px;font-size:13px;color:#333;letter-spacing:-0.100px;">1</div>
<div class="t" style="left:106.20px;top:394px;font-size:13px;color:#1a1a1a;letter-spacing:-0.100px;">Огородникова Валентина Матвеевна</div>
<div class="t" style="left:364.50px;top:394px;font-size:13px;color:#333;letter-spacing:-0.100px;">Огородникова</div>
<div class="t" style="left:686.00px;top:394px;font-size:13px;color:#333;letter-spacing:-0.100px;">Валентина</div>
<div class="t" style="left:952.40px;top:394px;font-size:13px;color:#333;letter-spacing:-0.100px;">Матвеевна</div>
<div class="t" style="left:1218.30px;top:394px;font-size:13px;color:#333;letter-spacing:-0.250px;">024-375-539 46</div>
<div class="a" style="left:28px;top:443px;width:1373px;height:1px;background:#e2e2e2"></div>
<div class="t" style="left:66.30px;top:423px;font-size:13px;color:#333;letter-spacing:-0.100px;">2</div>
<div class="t" style="left:106.20px;top:423px;font-size:13px;color:#333;letter-spacing:-0.100px;">Беленькая Руфина Борисовна</div>
<div class="t" style="left:364.50px;top:423px;font-size:13px;color:#333;letter-spacing:-0.100px;">Беленькая</div>
<div class="t" style="left:686.00px;top:423px;font-size:13px;color:#333;letter-spacing:-0.100px;">Руфина</div>
<div class="t" style="left:952.40px;top:423px;font-size:13px;color:#333;letter-spacing:-0.100px;">Борисовна</div>
<div class="t" style="left:1217.30px;top:423px;font-size:13px;color:#333;letter-spacing:-0.250px;">137-912-578 85</div>
<div class="a" style="left:28px;top:472px;width:1373px;height:1px;background:#e2e2e2"></div>
<div class="t" style="left:66.30px;top:452px;font-size:13px;color:#333;letter-spacing:-0.100px;">3</div>
<div class="t" style="left:106.20px;top:452px;font-size:13px;color:#333;letter-spacing:-0.100px;">Григорьянц Артур Ашотович</div>
<div class="t" style="left:364.50px;top:452px;font-size:13px;color:#333;letter-spacing:-0.100px;">Григорьянц</div>
<div class="t" style="left:687.00px;top:452px;font-size:13px;color:#333;letter-spacing:-0.100px;">Артур</div>
<div class="t" style="left:953.40px;top:452px;font-size:13px;color:#333;letter-spacing:-0.100px;">Ашотович</div>
<div class="t" style="left:1218.30px;top:452px;font-size:13px;color:#333;letter-spacing:-0.250px;">022-892-806 60</div>
<div class="a" style="left:28px;top:501px;width:1373px;height:1px;background:#e2e2e2"></div>
<div class="t" style="left:66.30px;top:481px;font-size:13px;color:#333;letter-spacing:-0.100px;">4</div>
<div class="t" style="left:106.20px;top:481px;font-size:13px;color:#333;letter-spacing:-0.100px;">Епишева Маргарита Алексеевна</div>
<div class="t" style="left:364.50px;top:481px;font-size:13px;color:#333;letter-spacing:-0.100px;">Епишева</div>
<div class="t" style="left:686.00px;top:481px;font-size:13px;color:#333;letter-spacing:-0.100px;">Маргарита</div>
<div class="t" style="left:953.40px;top:481px;font-size:13px;color:#333;letter-spacing:-0.100px;">Алексеевна</div>
<div class="t" style="left:1217.30px;top:481px;font-size:13px;color:#333;letter-spacing:-0.250px;">130-274-474 25</div>
<div class="a" style="left:28px;top:530px;width:1373px;height:1px;background:#e2e2e2"></div>
<div class="t" style="left:66.30px;top:510px;font-size:13px;color:#333;letter-spacing:-0.100px;">5</div>
<div class="t" style="left:106.20px;top:510px;font-size:13px;color:#333;letter-spacing:-0.100px;">Куприянова Валентина Евгеньевна</div>
<div class="t" style="left:364.50px;top:510px;font-size:13px;color:#333;letter-spacing:-0.100px;">Куприянова</div>
<div class="t" style="left:686.00px;top:510px;font-size:13px;color:#333;letter-spacing:-0.100px;">Валентина</div>
<div class="t" style="left:952.40px;top:510px;font-size:13px;color:#333;letter-spacing:-0.100px;">Евгеньевна</div>
<div class="t" style="left:1217.30px;top:510px;font-size:13px;color:#333;letter-spacing:-0.250px;">120-253-935 11</div>
<div class="a" style="left:28px;top:559px;width:1373px;height:1px;background:#e2e2e2"></div>
<div class="t" style="left:66.30px;top:539px;font-size:13px;color:#333;letter-spacing:-0.100px;">6</div>
<div class="t" style="left:106.20px;top:539px;font-size:13px;color:#333;letter-spacing:-0.100px;">Копейцева Серафима Игнатьевна</div>
<div class="t" style="left:364.50px;top:539px;font-size:13px;color:#333;letter-spacing:-0.100px;">Копейцева</div>
<div class="t" style="left:686.00px;top:539px;font-size:13px;color:#333;letter-spacing:-0.100px;">Серафима</div>
<div class="t" style="left:952.40px;top:539px;font-size:13px;color:#333;letter-spacing:-0.100px;">Игнатьевна</div>
<div class="t" style="left:1218.30px;top:539px;font-size:13px;color:#333;letter-spacing:-0.250px;">001-396-173 13</div>
<div class="a" style="left:28px;top:588px;width:1373px;height:1px;background:#e2e2e2"></div>
<div class="t" style="left:66.30px;top:568px;font-size:13px;color:#333;letter-spacing:-0.100px;">7</div>
<div class="t" style="left:106.20px;top:568px;font-size:13px;color:#333;letter-spacing:-0.100px;">Савельева Римма Михеевна</div>
<div class="t" style="left:364.50px;top:568px;font-size:13px;color:#333;letter-spacing:-0.100px;">Савельева</div>
<div class="t" style="left:686.00px;top:568px;font-size:13px;color:#333;letter-spacing:-0.100px;">Римма</div>
<div class="t" style="left:952.40px;top:568px;font-size:13px;color:#333;letter-spacing:-0.100px;">Михеевна</div>
<div class="t" style="left:1217.30px;top:568px;font-size:13px;color:#333;letter-spacing:-0.250px;">104-383-245 25</div>
<div class="a" style="left:28px;top:617px;width:1373px;height:1px;background:#e2e2e2"></div>
<div class="t" style="left:66.30px;top:597px;font-size:13px;color:#333;letter-spacing:-0.100px;">8</div>
<div class="t" style="left:106.20px;top:597px;font-size:13px;color:#333;letter-spacing:-0.100px;">Погодина Тамара Анатольевна</div>
<div class="t" style="left:364.50px;top:597px;font-size:13px;color:#333;letter-spacing:-0.100px;">Погодина</div>
<div class="t" style="left:687.00px;top:597px;font-size:13px;color:#333;letter-spacing:-0.100px;">Тамара</div>
<div class="t" style="left:953.40px;top:597px;font-size:13px;color:#333;letter-spacing:-0.100px;">Анатольевна</div>
<div class="t" style="left:1217.30px;top:597px;font-size:13px;color:#333;letter-spacing:-0.250px;">116-614-567 49</div>
<div class="a" style="left:28px;top:646px;width:1373px;height:1px;background:#e2e2e2"></div>
<div class="t" style="left:66.30px;top:626px;font-size:13px;color:#333;letter-spacing:-0.100px;">9</div>
<div class="t" style="left:106.20px;top:626px;font-size:13px;color:#333;letter-spacing:-0.100px;">Барышева Зоя Арнольдовна</div>
<div class="t" style="left:364.50px;top:626px;font-size:13px;color:#333;letter-spacing:-0.100px;">Барышева</div>
<div class="t" style="left:686.00px;top:626px;font-size:13px;color:#333;letter-spacing:-0.100px;">Зоя</div>
<div class="t" style="left:953.40px;top:626px;font-size:13px;color:#333;letter-spacing:-0.100px;">Арнольдовна</div>
<div class="t" style="left:1218.30px;top:626px;font-size:13px;color:#333;letter-spacing:-0.250px;">084-755-920 08</div>
<div class="a" style="left:28px;top:675px;width:1373px;height:1px;background:#e2e2e2"></div>
<div class="t" style="left:59.40px;top:655px;font-size:13px;color:#333;letter-spacing:-0.100px;">10</div>
<div class="t" style="left:106.20px;top:655px;font-size:13px;color:#333;letter-spacing:-0.100px;">Розенфельд Софья Исааковна</div>
<div class="t" style="left:364.50px;top:655px;font-size:13px;color:#333;letter-spacing:-0.100px;">Розенфельд</div>
<div class="t" style="left:686.00px;top:655px;font-size:13px;color:#333;letter-spacing:-0.100px;">Софья</div>
<div class="t" style="left:952.40px;top:655px;font-size:13px;color:#333;letter-spacing:-0.100px;">Исааковна</div>
<div class="t" style="left:1218.30px;top:655px;font-size:13px;color:#333;letter-spacing:-0.250px;">098-863-659 53</div>
<div class="a" style="left:28px;top:704px;width:1373px;height:1px;background:#e2e2e2"></div>
<div class="t" style="left:60.40px;top:684px;font-size:13px;color:#333;letter-spacing:-0.100px;">11</div>
<div class="t" style="left:106.20px;top:684px;font-size:13px;color:#333;letter-spacing:-0.100px;">Ревин Лев Соломонович</div>
<div class="t" style="left:364.50px;top:684px;font-size:13px;color:#333;letter-spacing:-0.100px;">Ревин</div>
<div class="t" style="left:687.00px;top:684px;font-size:13px;color:#333;letter-spacing:-0.100px;">Лев</div>
<div class="t" style="left:952.40px;top:684px;font-size:13px;color:#333;letter-spacing:-0.100px;">Соломонович</div>
<div class="t" style="left:1217.30px;top:684px;font-size:13px;color:#333;letter-spacing:-0.250px;">123-307-233 06</div>
<div class="a" style="left:90px;top:386px;width:1px;height:319px;background:#d0d4d8"></div>
<div class="a" style="left:17px;top:729px;width:15px;height:15px;box-sizing:border-box;border:1px solid #d8d8d8;border-radius:2px;background:#fff"></div>
<div class="t" style="left:37.30px;top:730px;font-size:13px;color:#a6a6a6;letter-spacing:-0.080px;">Начислены взносы на обязательное пенсионное страхование</div>
<div class="a" style="left:17px;top:755px;width:15px;height:15px;box-sizing:border-box;border:1px solid #d8d8d8;border-radius:2px;background:#fff"></div>
<div class="t" style="left:37.30px;top:756px;font-size:13px;color:#a6a6a6;letter-spacing:-0.093px;">Начислены взносы по дополнительному тарифу</div>
<div class="t" style="left:15.30px;top:786px;font-size:13px;color:#4d4d4d;letter-spacing:0.183px;">Руководитель:</div>
<div class="a" style="left:109px;top:780px;width:410px;height:25px;box-sizing:border-box;border:1px solid #a9a9a9;border-radius:3px;background:#fff;"></div>
<div class="a" style="left:476px;top:781px;width:1px;height:23px;background:#b4b4b4"></div>
<div class="a" style="left:497px;top:781px;width:1px;height:23px;background:#b4b4b4"></div>
<svg class="a" style="left:484px;top:791px;" width="5" height="3" viewBox="0 0 5 3"><path d="M0 0 H5 L2.5 3 Z" fill="#444"/></svg>
<svg class="a" style="left:504px;top:788px;" width="9" height="9" viewBox="0 0 9 9"><rect x="3.5" y="0.5" width="5" height="5" fill="none" stroke="#444"/><path d="M0.5 3 V8.5 H6" fill="none" stroke="#444"/></svg>
<div class="t" style="left:111.90px;top:786px;font-size:13px;color:#333;letter-spacing:-0.100px;">Погодина Тамара Анатольевна</div>
<div class="t" style="left:529.00px;top:786px;font-size:13px;color:#4d4d4d;letter-spacing:0.022px;">Должность:</div>
<div class="a" style="left:603px;top:780px;width:410px;height:25px;box-sizing:border-box;border:1px solid #a9a9a9;border-radius:3px;background:#fff;"></div>
<div class="a" style="left:970px;top:781px;width:1px;height:23px;background:#b4b4b4"></div>
<div class="a" style="left:991px;top:781px;width:1px;height:23px;background:#b4b4b4"></div>
<svg class="a" style="left:978px;top:791px;" width="5" height="3" viewBox="0 0 5 3"><path d="M0 0 H5 L2.5 3 Z" fill="#444"/></svg>
<svg class="a" style="left:998px;top:788px;" width="9" height="9" viewBox="0 0 9 9"><rect x="3.5" y="0.5" width="5" height="5" fill="none" stroke="#444"/><path d="M0.5 3 V8.5 H6" fill="none" stroke="#444"/></svg>
<div class="t" style="left:607.00px;top:786px;font-size:13px;color:#333;letter-spacing:-0.120px;">Директор</div>
<div class="t" style="left:15.30px;top:820px;font-size:13px;color:#4d4d4d;letter-spacing:-0.091px;">Комментарий:</div>
<div class="a" style="left:105px;top:814px;width:410px;height:25px;box-sizing:border-box;border:1px solid #a9a9a9;border-radius:3px;background:#fff;"></div>
<div class="t" style="left:524.40px;top:820px;font-size:13px;color:#4d4d4d;letter-spacing:-0.100px;">Ответственный:</div>
<div class="a" style="left:624px;top:814px;width:410px;height:25px;box-sizing:border-box;border:1px solid #a9a9a9;border-radius:3px;background:#fff;"></div>
<div class="a" style="left:991px;top:815px;width:1px;height:23px;background:#b4b4b4"></div>
<div class="a" style="left:1012px;top:815px;width:1px;height:23px;background:#b4b4b4"></div>
<svg class="a" style="left:999px;top:825px;" width="5" height="3" viewBox="0 0 5 3"><path d="M0 0 H5 L2.5 3 Z" fill="#444"/></svg>
<svg class="a" style="left:1019px;top:822px;" width="9" height="9" viewBox="0 0 9 9"><rect x="3.5" y="0.5" width="5" height="5" fill="none" stroke="#444"/><path d="M0.5 3 V8.5 H6" fill="none" stroke="#444"/></svg>
<div class="a" style="left:0px;top:851px;width:1435px;height:4px;background:linear-gradient(#a2a3a5 25%,#b4b5b7 26%,#c2c3c5)"></div>
<div class="a" style="left:517px;top:356px;width:402px;height:141px;box-sizing:border-box;border:1px solid #8e8e8e;border-radius:6px 6px 0 0;background:linear-gradient(#f2f2f2,#d4d4d4 18px,#c6c6c6 25px,#c6c6c6);box-shadow:1px 1px 2px rgba(0,0,0,0.25)"></div>
<div class="a" style="left:523px;top:382px;width:390px;height:109px;background:#fff;box-shadow:0 0 2px 1px rgba(0,0,0,0.18)"></div>
<div class="t" style="left:526.60px;top:366px;font-size:11px;color:#333;letter-spacing:-0.185px;">1С:Предприятие</div>
<svg class="a" style="left:898px;top:366px;" width="11" height="10" viewBox="0 0 11 10"><path d="M1 0.8 L10 9.2 M10 0.8 L1 9.2" stroke="#6a6a6a" stroke-width="1.8"/></svg>
<div class="t" style="left:533.50px;top:400px;font-size:13px;color:#333;letter-spacing:-0.065px;">При проверке встроенной проверкой ошибок не обнаружено.</div>
<div class="t" style="left:533.50px;top:416px;font-size:13px;color:#333;letter-spacing:-0.046px;">Выполнить проверку сторонними программами?</div>
<div class="a" style="left:606px;top:447px;width:108px;height:28px;box-sizing:border-box;border:1px solid #a8a8a8;border-radius:3px;background:linear-gradient(#fdfdfd,#ececec)"></div>
<div class="a" style="left:608px;top:449px;width:104px;height:24px;box-sizing:border-box;border:1px dotted #555;"></div>
<div class="t" style="left:652.90px;top:455px;font-size:13px;color:#333;letter-spacing:-0.100px;">Да</div>
<div class="a" style="left:721px;top:447px;width:108px;height:28px;box-sizing:border-box;border:1px solid #b0b0b0;border-radius:3px;background:linear-gradient(#fdfdfd,#ececec)"></div>
<div class="t" style="left:764.20px;top:455px;font-size:13px;color:#333;letter-spacing:-0.250px;">Нет</div>
</body></html>
